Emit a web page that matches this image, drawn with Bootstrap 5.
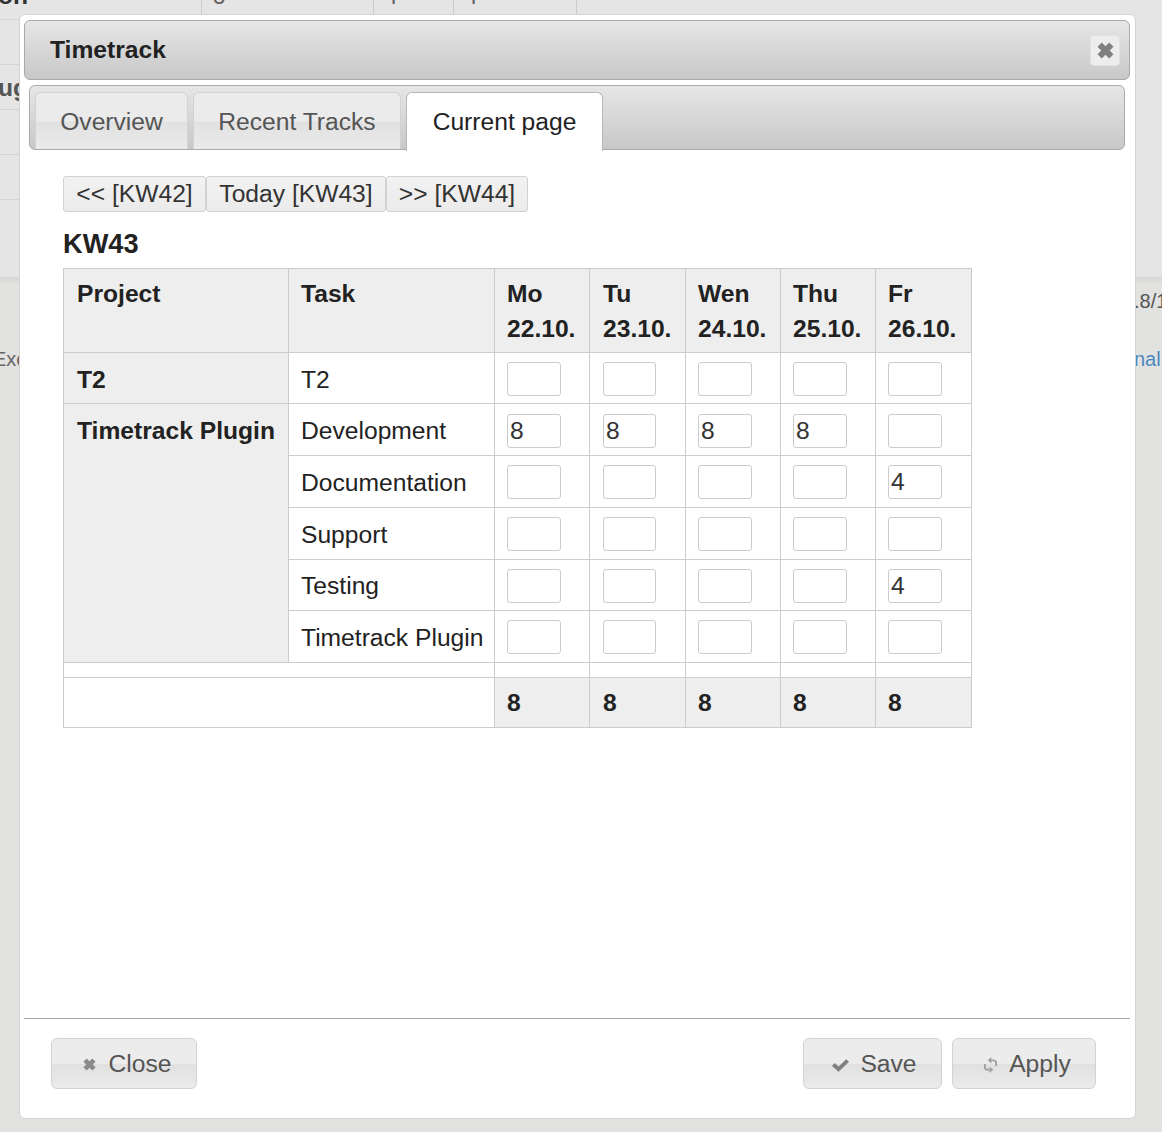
<!DOCTYPE html>
<html lang="en">
<head>
  <meta charset="utf-8" />
  <meta name="viewport" content="width=device-width, initial-scale=1" />
  <title>Timetrack</title>
  <link href="https://cdn.jsdelivr.net/npm/bootstrap@5.3.2/dist/css/bootstrap.min.css" rel="stylesheet" />
  <style>
    html, body { height: 100%; }
    body {
      background: #e2e2e0;
      color: #222;
      font-family: "Liberation Sans", Arial, sans-serif;
      font-size: 24.64px;
      line-height: 34px;
      overflow: hidden;
      position: relative;
    }
    /* page behind the dialog */
    .behind-top { height: 277px; background: #e5e5e5; overflow: hidden; position: relative; }
    .behind-cells { display: flex; height: 14px; margin-left: 201px; width: 377px; color: #666; overflow: hidden; }
    .behind-cells > div { border-left: 1px solid #ccc; padding-left: 10px; line-height: 1; margin-top: -16px; height: 30px; }
    .behind-cells > div:last-child { border-right: 1px solid #ccc; }
    .behind-line { height: 1px; background: #d4d4d4; width: 20px; }
    .behind-rows { display: flex; flex-direction: column; gap: 44px; margin-top: 5px; }
    .behind-on { position: absolute; left: -2px; top: -16px; font-weight: 700; color: #333; line-height: 1; }
    .behind-ug { position: absolute; left: -2px; top: 76px; font-weight: 700; color: #555; line-height: 1; }
    .behind-low { height: 8px; background: linear-gradient(#d6d6d4, #e2e2e0); }
    .behind-ver { position: absolute; left: 1134px; top: 291px; font-size: 20px; line-height: 20px; color: #555; white-space: nowrap; }
    .behind-ex { position: absolute; left: -7px; top: 349px; font-size: 20px; line-height: 20px; color: #666; }
    .behind-nal { position: absolute; left: 1134px; top: 349px; font-size: 20px; line-height: 20px; color: #4d88bf; }

    /* dialog */
    .tt-dialog {
      position: absolute; left: 19px; top: 14px; width: 1117px; height: 1105px;
      background: #fff; border: 1px solid #d4d4d4; border-radius: 6px;
      padding: 5px 5px 0 4px; display: flex; flex-direction: column;
    }
    .tt-head {
      height: 60px; border: 1px solid #aaa; border-radius: 6px; flex: none;
      background: linear-gradient(#e6e6e6, #c8c8c8);
      padding-left: 25px; padding-right: 9px;
      font-weight: 700; color: #222;
    }
    .tt-x {
      width: 30px; height: 31px; padding: 0; border: 1px solid #e2e2e2; border-radius: 4px;
      background: #ededed; display: flex; align-items: center; justify-content: center;
    }
    .tt-tabs {
      height: 65px; margin: 5px 5px 0 5px; flex: none; position: relative;
      border: 1px solid #aaa; border-radius: 6px;
      background: linear-gradient(#e6e6e6, #c8c8c8);
      padding: 6px 0 0 5px; gap: 5px; flex-wrap: nowrap;
    }
    .tt-tabs .nav-link {
      height: 57px; margin: 0; padding: 0; border: 1px solid #d2d2d2; border-bottom: 0;
      border-radius: 6px 6px 0 0; color: #555; font-size: 24.64px; line-height: 58px; text-align: center;
      background: linear-gradient(#ebebeb 0, #ebebeb 50%, #e1e1e1 52%, #eaeaea 100%);
    }
    .tt-tabs .nav-link.active {
      height: 59px; background: #fff; color: #222; border-color: #b8b8b8;
    }
    .tab-w1 { width: 153px; }
    .tab-w2 { width: 208px; }
    .tab-w3 { width: 197px; }

    .tt-body { flex: 1 1 auto; padding: 26px 0 0 39px; min-height: 0; }
    .tt-weekbtns { display: flex; height: 36px; }
    .tt-weekbtn {
      height: 36px; border: 1px solid #d2d2d2; border-radius: 3px; padding: 0;
      color: #333; font-size: 24.64px; line-height: 32px; white-space: nowrap;
      background: linear-gradient(#f2f2f2, #ebebeb);
    }
    .wk-prev { width: 143px; }
    .wk-today { width: 180px; }
    .wk-next { width: 142px; }
    .tt-week { font-size: 27.2px; font-weight: 700; line-height: 32px; margin: 16px 0 8px; color: #222; }
    table.tt-table { width: 909px; table-layout: fixed; border-collapse: collapse; margin: 0; color: #222; }
    .tt-table th, .tt-table td {
      border: 1px solid #ccc; padding: 0 12px; vertical-align: top;
      background: #fff; color: #222; box-shadow: none; font-size: 24.64px; line-height: 34px; white-space: nowrap;
    }
    .tt-table th { background: #eee; font-weight: 700; }
    .tt-table .row-head th { padding-top: 7px; padding-bottom: 6px; height: 84px; line-height: 35px; }
    .tt-table .row-head th:nth-child(1) { padding-left: 13px; }
    .tt-table .rowq td, .tt-table .rowq th { height: 52px; padding-top: 10px; }
    .tt-table .row-short td, .tt-table .row-short th { height: 51px; }
    .tt-table .rowq th { padding-left: 13px; }
    .tt-table .rowq td.cell-in { padding-top: 9px; padding-bottom: 0; }
    .tt-table .rowq td.cell-drop { padding-top: 10px; }
    .tt-table td.cell-up { padding-top: 9px; }
    .tt-table tr > :nth-last-child(4) { padding-left: 13px; }
    .tt-table .row-gap td { height: 15px; padding: 0; }
    .tt-table .row-sum td, .tt-table .row-sum th { height: 50px; padding-top: 8px; }
    .tt-table .row-sum th { background: #eee; }
    .tt-input {
      display: block; width: 54px; height: 34px; padding: 0 2px; border: 1px solid #ccc; border-radius: 3px;
      font-size: 24.64px; line-height: 32px; color: #333; background: #fff;
    }
    .tt-table td:nth-last-child(4) .tt-input { width: 53px; }

    .tt-foot {
      height: 100px; flex: none; border-top: 1px solid #aaa;
      padding: 19px 34px 0 27px; align-items: flex-start;
    }
    .tt-right { gap: 10px; }
    .tt-btn {
      height: 51px; border: 1px solid #d2d2d2; border-radius: 6px; padding: 2px 0 0 6px;
      color: #555; font-size: 24.64px; line-height: 1;
      background: linear-gradient(#ececec 0, #ececec 50%, #e1e1e1 52%, #ebebeb 100%);
      display: flex; align-items: center; justify-content: center; gap: 12px;
    }
    .btn-close-w { width: 146px; gap: 13px; }
    .btn-save-w { width: 139px; gap: 10px; padding-left: 3px; }
    .btn-apply-w { width: 144px; gap: 11px; }
  </style>
</head>
<body>
  <!-- page behind -->
  <div class="behind-top">
    <div class="behind-on">on</div>
    <div class="behind-ug">ug</div>
    <div class="behind-cells">
      <div style="width:172px">6</div>
      <div style="width:80px">4</div>
      <div style="width:124px">4</div>
    </div>
    <div class="behind-rows">
      <div class="behind-line"></div>
      <div class="behind-line"></div>
      <div class="behind-line"></div>
      <div class="behind-line"></div>
      <div class="behind-line"></div>
    </div>
  </div>
  <div class="behind-low"></div>
  <div class="behind-ver">.8/12</div>
  <div class="behind-ex">Exc</div>
  <div class="behind-nal">nal</div>

  <!-- dialog -->
  <div class="tt-dialog">
    <div class="tt-head d-flex align-items-center justify-content-between">
      <span>Timetrack</span>
      <button type="button" class="tt-x" aria-label="Close">
        <svg width="17" height="17" viewBox="0 0 16 16"><path d="M4.5.5 8 4l3.5-3.5 4 4L12 8l3.5 3.5-4 4L8 12l-3.5 3.5-4-4L4 8 .5 4.5z" fill="#808080"/></svg>
      </button>
    </div>

    <ul class="nav tt-tabs">
      <li class="nav-item"><a class="nav-link tab-w1" href="#">Overview</a></li>
      <li class="nav-item"><a class="nav-link tab-w2" href="#">Recent Tracks</a></li>
      <li class="nav-item"><a class="nav-link tab-w3 active" href="#">Current page</a></li>
    </ul>

    <div class="tt-body">
      <div class="tt-weekbtns">
        <button type="button" class="tt-weekbtn wk-prev">&lt;&lt; [KW42]</button>
        <button type="button" class="tt-weekbtn wk-today">Today [KW43]</button>
        <button type="button" class="tt-weekbtn wk-next">&gt;&gt; [KW44]</button>
      </div>
      <div class="tt-week">KW43</div>
      <table class="table tt-table">
        <colgroup>
          <col style="width:225px"><col style="width:206px"><col style="width:95px"><col style="width:96px"><col style="width:95px"><col style="width:95px"><col style="width:96px">
        </colgroup>
        <thead>
          <tr class="row-head">
            <th>Project</th><th>Task</th>
            <th>Mo<br>22.10.</th><th>Tu<br>23.10.</th><th>Wen<br>24.10.</th><th>Thu<br>25.10.</th><th>Fr<br>26.10.</th>
          </tr>
        </thead>
        <tbody>
          <tr class="rowq row-short">
            <th>T2</th><td>T2</td>
            <td class="cell-in"><input class="tt-input" value=""></td><td class="cell-in"><input class="tt-input" value=""></td><td class="cell-in"><input class="tt-input" value=""></td><td class="cell-in"><input class="tt-input" value=""></td><td class="cell-in"><input class="tt-input" value=""></td>
          </tr>
          <tr class="rowq">
            <th rowspan="5">Timetrack Plugin</th><td>Development</td>
            <td class="cell-in cell-drop"><input class="tt-input" value="8"></td><td class="cell-in cell-drop"><input class="tt-input" value="8"></td><td class="cell-in cell-drop"><input class="tt-input" value="8"></td><td class="cell-in cell-drop"><input class="tt-input" value="8"></td><td class="cell-in cell-drop"><input class="tt-input" value=""></td>
          </tr>
          <tr class="rowq">
            <td>Documentation</td>
            <td class="cell-in"><input class="tt-input" value=""></td><td class="cell-in"><input class="tt-input" value=""></td><td class="cell-in"><input class="tt-input" value=""></td><td class="cell-in"><input class="tt-input" value=""></td><td class="cell-in"><input class="tt-input" value="4"></td>
          </tr>
          <tr class="rowq">
            <td>Support</td>
            <td class="cell-in"><input class="tt-input" value=""></td><td class="cell-in"><input class="tt-input" value=""></td><td class="cell-in"><input class="tt-input" value=""></td><td class="cell-in"><input class="tt-input" value=""></td><td class="cell-in"><input class="tt-input" value=""></td>
          </tr>
          <tr class="rowq row-short">
            <td class="cell-up">Testing</td>
            <td class="cell-in"><input class="tt-input" value=""></td><td class="cell-in"><input class="tt-input" value=""></td><td class="cell-in"><input class="tt-input" value=""></td><td class="cell-in"><input class="tt-input" value=""></td><td class="cell-in"><input class="tt-input" value="4"></td>
          </tr>
          <tr class="rowq">
            <td>Timetrack Plugin</td>
            <td class="cell-in"><input class="tt-input" value=""></td><td class="cell-in"><input class="tt-input" value=""></td><td class="cell-in"><input class="tt-input" value=""></td><td class="cell-in"><input class="tt-input" value=""></td><td class="cell-in"><input class="tt-input" value=""></td>
          </tr>
          <tr class="row-gap">
            <td colspan="2"></td><td></td><td></td><td></td><td></td><td></td>
          </tr>
          <tr class="row-sum">
            <td colspan="2"></td><th>8</th><th>8</th><th>8</th><th>8</th><th>8</th>
          </tr>
        </tbody>
      </table>
    </div>

    <div class="tt-foot d-flex justify-content-between">
      <button type="button" class="tt-btn btn-close-w">
        <svg width="13" height="13" viewBox="0 0 16 16"><path d="M4.5.5 8 4l3.5-3.5 4 4L12 8l3.5 3.5-4 4L8 12l-3.5 3.5-4-4L4 8 .5 4.5z" fill="#8a8a8a"/></svg>
        Close
      </button>
      <div class="d-flex tt-right">
        <button type="button" class="tt-btn btn-save-w">
          <svg width="19" height="16" viewBox="0 0 20 16"><path d="M1 9l3-3 4 3.5L16 2l3 2.5L8 15z" fill="#808080"/></svg>
          Save
        </button>
        <button type="button" class="tt-btn btn-apply-w">
          <svg width="15" height="18" viewBox="0 0 16 18"><path d="M9 4h2q3 0 3 3v3M7 14H5q-3 0-3-3V8" fill="none" stroke="#a0a0a0" stroke-width="2"/><path d="M9 0.500v7L5 4zM7 10.500v7l4-3.500z" fill="#a0a0a0"/></svg>
          Apply
        </button>
      </div>
    </div>
  </div>

  <script src="https://cdn.jsdelivr.net/npm/bootstrap@5.3.2/dist/js/bootstrap.bundle.min.js"></script>
</body>
</html>
